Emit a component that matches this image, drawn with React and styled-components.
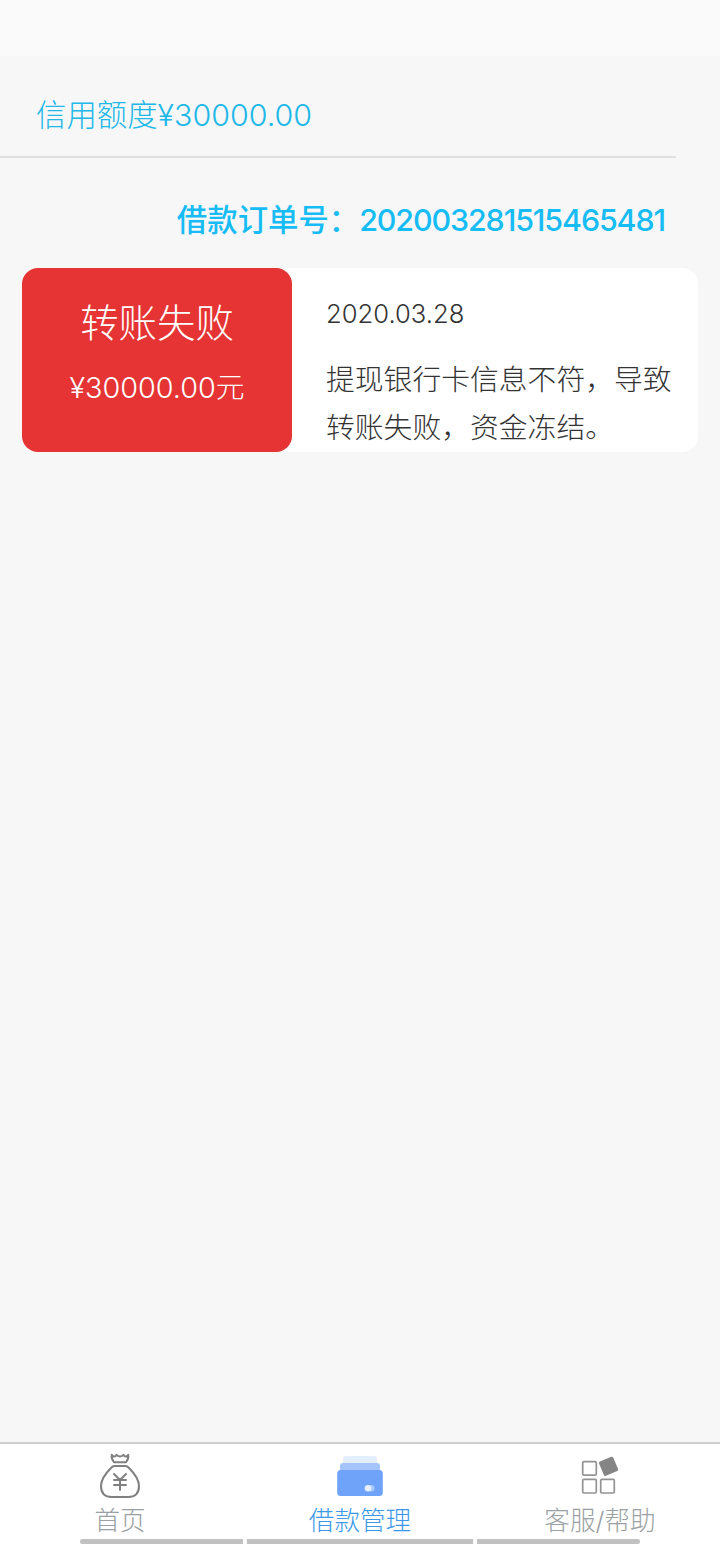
import React from 'react';
import styled, { createGlobalStyle } from 'styled-components';

const GlobalStyle = createGlobalStyle`
  * {
    box-sizing: border-box;
  }

  body {
    margin: 0;
    background-color: #f7f7f7;
    font-family: Inter, 'Noto Sans CJK SC', sans-serif;
    font-weight: 300;
  }
`;

const Page = styled.div`
  display: flex;
  flex-direction: column;
  width: 720px;
  height: 1544px;
  overflow: hidden;
`;

const StatusBar = styled.div`
  height: 56px;
  background-color: #fafafa;
`;

const Main = styled.main`
  flex: 1;
`;

const CreditLimit = styled.div`
  display: flex;
  align-items: center;
  width: 676px;
  height: 102px;
  padding: 18px 0 0 36px;
  border-bottom: 2px solid #e0e0e0;
  color: #20b8e8;
  font-size: 30.4px;
  line-height: 40px;
`;

const OrderNumber = styled.div`
  display: flex;
  align-items: center;
  justify-content: flex-end;
  height: 110px;
  padding: 14px 55px 0 0;
  color: #16bcf6;
  font-size: 30.4px;
  font-weight: 500;
  line-height: 40px;
`;

const OrderDigits = styled.span`
  letter-spacing: -1.1px;
`;

const Card = styled.section`
  display: flex;
  width: 676px;
  height: 184px;
  margin-left: 22px;
  border-radius: 16px;
  background-color: #fff;
`;

const Status = styled.div`
  display: flex;
  flex-direction: column;
  align-items: center;
  gap: 17px;
  width: 270px;
  padding-top: 31px;
  border-radius: 16px;
  background-color: #e63333;
  color: #fff;
`;

const StatusTitle = styled.div`
  font-size: 38.4px;
  line-height: 48px;
`;

const StatusAmount = styled.div`
  font-size: 28.8px;
  line-height: 48px;
`;

const Detail = styled.div`
  flex: 1;
  padding: 26px 0 0 34px;
  color: #333;
`;

const DetailDate = styled.div`
  font-size: 25.6px;
  line-height: 40px;
`;

const DetailText = styled.p`
  width: 350px;
  margin: 22px 0 0;
  font-size: 28.8px;
  line-height: 48px;
`;

const TabBar = styled.nav`
  display: flex;
  flex-direction: column;
  height: 102px;
  border-top: 2px solid #cfcfcf;
  background-color: #fff;
`;

const Tabs = styled.div`
  display: flex;
  height: 95px;
`;

const Tab = styled.div`
  display: flex;
  flex: 1;
  flex-direction: column;
  align-items: center;
  padding-top: 8px;
  color: ${({ $active }) => ($active ? '#3d98e8' : '#9aa0a3')};
  font-size: 25.6px;
  line-height: 36px;

  svg {
    display: block;
    margin-bottom: 3px;
  }
`;

const ScrollTrack = styled.div`
  display: flex;
  gap: 4px;
  width: 560px;
  height: 5px;
  margin: 0 auto;
  border-radius: 3px;
  overflow: hidden;
`;

const ScrollPart = styled.div`
  flex: ${({ $size }) => $size};
  background-color: #c1c1c1;
`;

function MoneyBagIcon() {
  return (
    <svg width='48' height='48' viewBox='0 0 48 48' fill='none' stroke='#808080' strokeWidth='2' strokeLinecap='round' strokeLinejoin='round'>
      <path d='M18 10.2 C15.8 7.5 15.3 5 15.8 2.8 C17.5 5.2 19.5 5 20.5 2.8 C22 5 26 5 27.5 2.8 C28.5 5 30.5 5.2 32.2 2.8 C32.7 5 32.2 7.5 30 10.2 Z' />
      <path d='M18.5 14 H29.5 C31 14 32 14.8 33 16 C38 21 43 27.5 43 34 C43 41 39 45 32 45 H16 C9 45 5 41 5 34 C5 27.5 10 21 15 16 C16 14.8 17 14 18.5 14 Z' />
      <path d='M18 22 L24 28 L30 22 M24 28 V38 M18 28 H30 M18 33 H30' />
    </svg>
  );
}

function WalletIcon() {
  return (
    <svg width='48' height='48' viewBox='0 0 48 48'>
      <rect x='7' y='4' width='34' height='16' rx='3' fill='#e3eeff' />
      <rect x='4' y='11' width='40' height='16' rx='3' fill='#a4c4fb' />
      <rect x='1.2' y='18' width='45.6' height='26' rx='3.5' fill='#6fa3fa' />
      <circle cx='35.2' cy='36.2' r='3.3' fill='#a9c8fc' />
      <circle cx='32' cy='36.2' r='3.3' fill='#e5efff' />
      <circle cx='38.5' cy='36.2' r='0' fill='#a9c8fc' />
    </svg>
  );
}

function AppsIcon() {
  return (
    <svg width='48' height='48' viewBox='0 0 48 48' fill='none' stroke='#939393' strokeWidth='1.7'>
      <rect x='6.7' y='9.6' width='13.6' height='13.6' rx='1.2' />
      <rect x='6.7' y='27.4' width='13.6' height='13.6' rx='1.2' />
      <rect x='24.7' y='27.4' width='13.6' height='13.6' rx='1.2' />
      <rect x='24.9' y='6.6' width='15.4' height='15.4' rx='1.6' fill='#858585' stroke='none' transform='rotate(-23 32.6 14.3)' />
    </svg>
  );
}

export default function App() {
  return (
    <>
      <GlobalStyle />
      <Page>
        <StatusBar />
        <Main>
          <CreditLimit>信用额度¥30000.00</CreditLimit>
          <OrderNumber>
            借款订单号：<OrderDigits>202003281515465481</OrderDigits>
          </OrderNumber>
          <Card>
            <Status>
              <StatusTitle>转账失败</StatusTitle>
              <StatusAmount>¥30000.00元</StatusAmount>
            </Status>
            <Detail>
              <DetailDate>2020.03.28</DetailDate>
              <DetailText>提现银行卡信息不符，导致转账失败，资金冻结。</DetailText>
            </Detail>
          </Card>
        </Main>
        <TabBar>
          <Tabs>
            <Tab>
              <MoneyBagIcon />
              首页
            </Tab>
            <Tab $active>
              <WalletIcon />
              借款管理
            </Tab>
            <Tab>
              <AppsIcon />
              客服/帮助
            </Tab>
          </Tabs>
          <ScrollTrack>
            <ScrollPart $size={163} />
            <ScrollPart $size={226} />
            <ScrollPart $size={163} />
          </ScrollTrack>
        </TabBar>
      </Page>
    </>
  );
}
